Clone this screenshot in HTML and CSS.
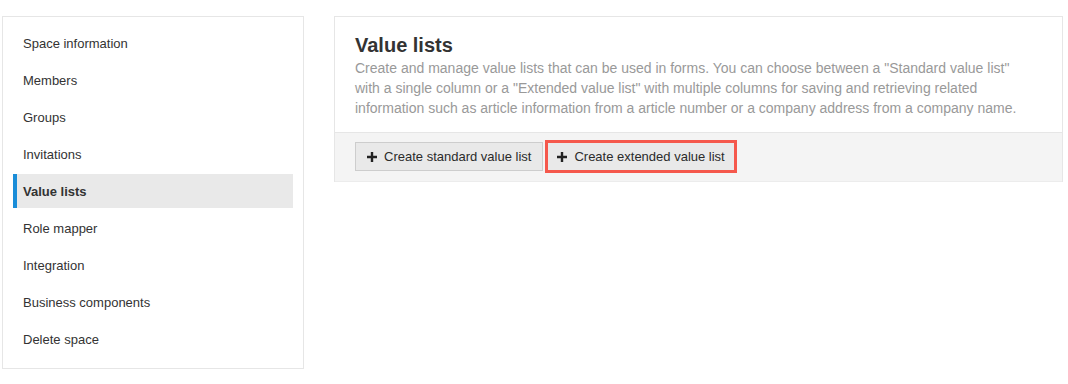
FILE: index.html
```html
<!DOCTYPE html>
<html>
<head>
<meta charset="utf-8">
<link rel="stylesheet" href="styles.css">
</head>
<body>
<div class="page">
  <nav class="sidebar">
    <div class="nav-item">Space information</div>
    <div class="nav-item">Members</div>
    <div class="nav-item">Groups</div>
    <div class="nav-item">Invitations</div>
    <div class="nav-item active">Value lists</div>
    <div class="nav-item">Role mapper</div>
    <div class="nav-item">Integration</div>
    <div class="nav-item">Business components</div>
    <div class="nav-item">Delete space</div>
  </nav>
  <main class="panel">
    <div class="panel-header">
      <h1 class="title">Value lists</h1>
      <p class="desc">Create and manage value lists that can be used in forms. You can choose between a "Standard value list" with a single column or a "Extended value list" with multiple columns for saving and retrieving related information such as article information from a article number or a company address from a company name.</p>
    </div>
    <div class="toolbar">
      <button class="btn"><svg class="plus" viewBox="0 0 10 10" width="10" height="10"><path d="M5 0v10M0 5h10" stroke="#222" stroke-width="2.4"/></svg>Create standard value list</button>
      <button class="btn btn-highlight"><svg class="plus" viewBox="0 0 10 10" width="10" height="10"><path d="M5 0v10M0 5h10" stroke="#222" stroke-width="2.4"/></svg>Create extended value list</button>
    </div>
  </main>
</div>
</body>
</html>
```
FILE: styles.css
```css
html, body {
  margin: 0;
  padding: 0;
  background: #fff;
}
body {
  font-family: "Liberation Sans", Arial, Helvetica, sans-serif;
  font-size: 13px;
  color: #333;
}
.page {
  display: flex;
  align-items: flex-start;
  padding: 16px 0 0 2px;
}
.sidebar {
  width: 280px;
  border: 1px solid #e6e6e6;
  padding: 9px 10px;
  flex: none;
}
.nav-item {
  height: 34px;
  line-height: 36px;
  margin-bottom: 3px;
  padding-left: 10px;
  font-size: 13px;
  color: #333;
  overflow: hidden;
}
.nav-item.active {
  background: #e9e9e9;
  border-left: 4px solid #1a8dd8;
  padding-left: 6px;
  font-weight: bold;
}
.panel {
  margin-left: 30px;
  width: 727px;
  border: 1px solid #e6e6e6;
  border-bottom: none;
}
.panel-header {
  padding: 16px 20px 14px;
}
.title {
  margin: 0;
  font-size: 20px;
  line-height: 24px;
  font-weight: bold;
  color: #333;
}
.desc {
  margin: 1px 0 0;
  max-width: 678px;
  font-size: 14px;
  line-height: 20px;
  color: #999;
}
.toolbar {
  display: flex;
  align-items: center;
  background: #f4f4f4;
  border-top: 1px solid #e6e6e6;
  border-bottom: 1px solid #ececec;
  padding: 7px 20px 8px;
}
.btn {
  display: flex;
  align-items: center;
  gap: 7px;
  height: 29px;
  box-sizing: border-box;
  border: 1px solid #cdcdcd;
  background: #e9e9e9;
  padding: 0 11px 0 11px;
  font-family: inherit;
  font-size: 13px;
  color: #2b2b2b;
  margin: 0;
  border-radius: 0;
}
.btn-highlight {
  height: 33px;
  border: 3px solid #f5584c;
  padding: 0 9px 0 9px;
  margin-left: 2px;
}
.plus {
  display: block;
  flex: none;
}
```
